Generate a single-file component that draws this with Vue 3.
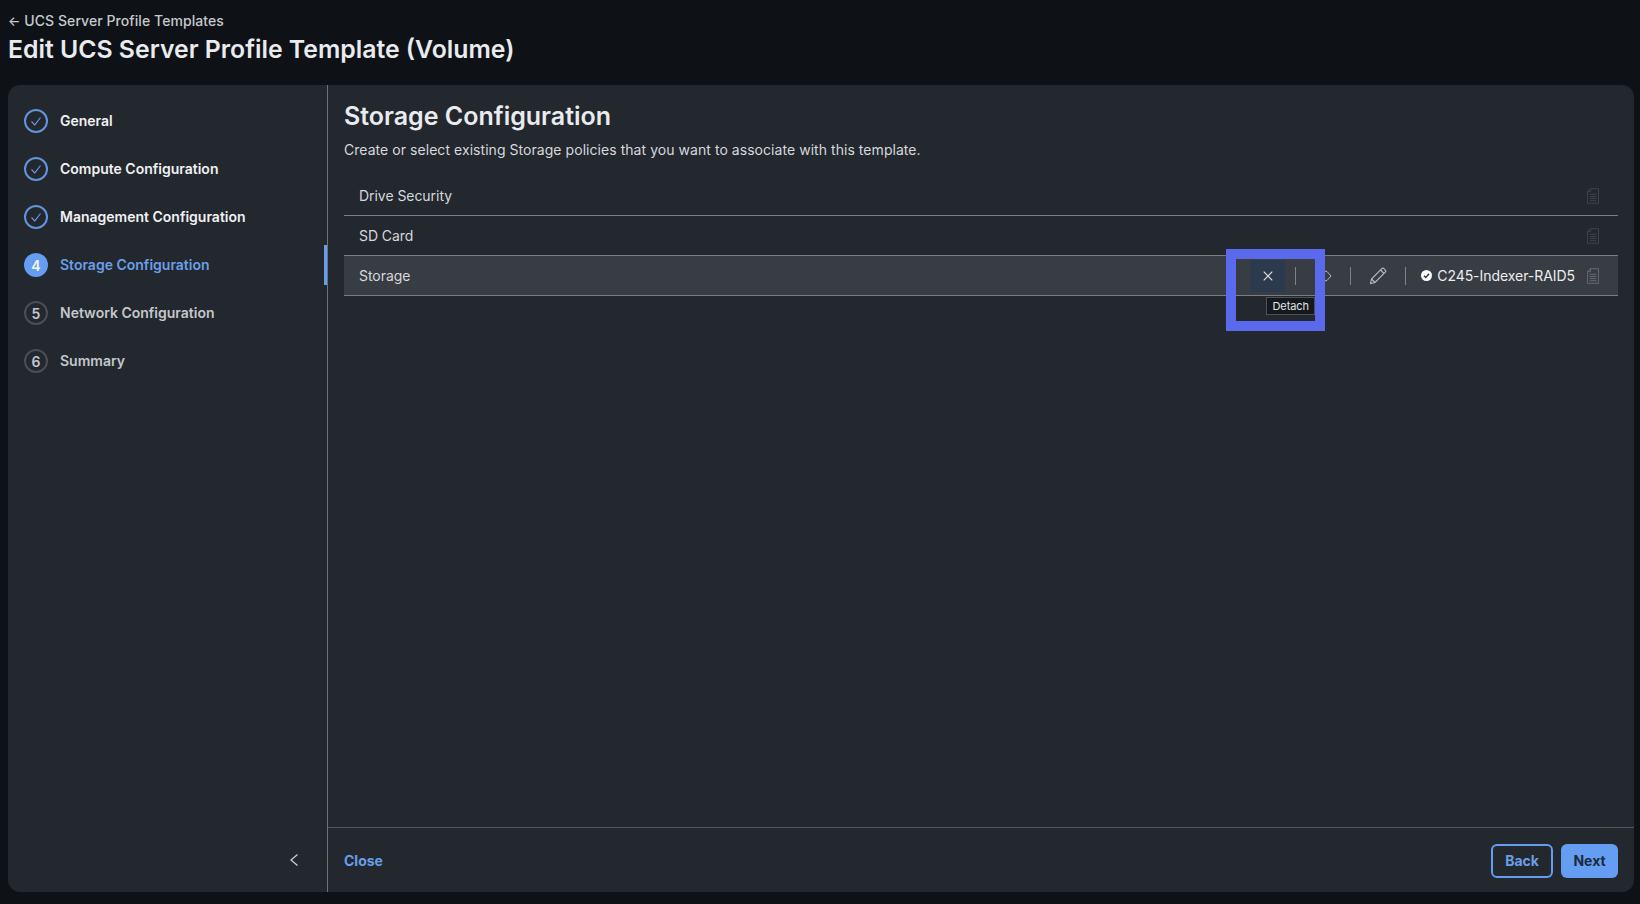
<script setup>
const steps = [
  { label: 'General', state: 'done' },
  { label: 'Compute Configuration', state: 'done' },
  { label: 'Management Configuration', state: 'done' },
  { label: 'Storage Configuration', state: 'active', n: 4 },
  { label: 'Network Configuration', state: 'todo', n: 5 },
  { label: 'Summary', state: 'todo', n: 6 },
]
const rows = [
  { name: 'Drive Security' },
  { name: 'SD Card' },
]
</script>

<template>
  <div class="page">
    <header class="head">
      <div class="crumb"><span class="arrow">←</span> UCS Server Profile Templates</div>
      <h1 class="title">Edit UCS Server Profile Template (Volume)</h1>
    </header>
    <section class="panel">
      <aside class="rail">
        <ul class="steps">
          <li v-for="s in steps" :key="s.label" class="step" :class="s.state">
            <span class="dot">
              <svg v-if="s.state === 'done'" width="14" height="14" viewBox="0 0 14 14" fill="none">
                <path d="M2.5 7.5 L5.8 10.8 L11.5 3.5" stroke="#6a9fe8" stroke-width="1.1" />
              </svg>
              <template v-else>{{ s.n }}</template>
            </span>
            <span class="lab">{{ s.label }}</span>
          </li>
        </ul>
        <div class="collapse">
          <svg width="10" height="14" viewBox="0 0 10 14" fill="none">
            <path d="M8.5 1.5 L2 7 L8.5 12.5" stroke="#c9ccd1" stroke-width="1.3" />
          </svg>
        </div>
      </aside>
      <main class="main">
        <div class="body">
          <h2 class="h2">Storage Configuration</h2>
          <p class="desc">Create or select existing Storage policies that you want to associate with this template.</p>
          <div class="list">
            <div v-for="r in rows" :key="r.name" class="row">
              <span class="name">{{ r.name }}</span>
              <svg class="doc dim" width="12" height="16" viewBox="0 0 14 18" fill="none">
                <path d="M4 .5H13.5V17.5H.5V4Z M4 .5V4H.5 M3 7H11 M3 9.5H11 M3 12H11 M3 14.5H11" stroke="currentColor" />
              </svg>
            </div>
            <div class="row sel">
              <span class="name">Storage</span>
              <div class="acts">
                <span class="x-btn">
                  <svg width="10" height="10" viewBox="0 0 10 10" fill="none">
                    <path d="M.7.7 9.300 9.300M9.300.7.7 9.300" stroke="#e4e6e9" stroke-width="1.1" />
                  </svg>
                  <span class="tip">Detach</span>
                </span>
                <i class="sep s1"></i>
                <svg class="eye" width="16" height="12" viewBox="0 0 16 12" fill="none">
                  <path d="M1 6 5 1.500Q8 .5 11 1.500L15 6 11 10.500Q8 11.500 5 10.500Z" stroke="#b5b8bd" />
                </svg>
                <i class="sep s2"></i>
                <svg class="pen" width="18" height="18" viewBox="0 0 18 18" fill="none">
                  <path d="M1.500 16.500 2.500 12 12.800 1.700a1.500 1.500 0 0 1 2.100 0l1.400 1.400a1.500 1.500 0 0 1 0 2.100L6 15.500Z M2.500 12 6 15.500 M11.500 3 15 6.500" stroke="#b9bcc1" stroke-width="1.100" />
                </svg>
                <i class="sep s3"></i>
                <svg class="chk" width="11" height="11" viewBox="0 0 11 11">
                  <circle cx="5.500" cy="5.500" r="5.500" fill="#fff" />
                  <path d="M3 5.700 4.800 7.400 8 3.800" stroke="#30343b" stroke-width="1.400" fill="none" />
                </svg>
                <span class="pol">C245-Indexer-RAID5</span>
              </div>
              <svg class="doc" width="12" height="16" viewBox="0 0 14 18" fill="none">
                <path d="M4 .5H13.5V17.5H.5V4Z M4 .5V4H.5 M3 7H11 M3 9.5H11 M3 12H11 M3 14.5H11" stroke="currentColor" />
              </svg>
              <div class="mark"></div>
            </div>
          </div>
        </div>
        <footer class="foot">
          <a class="close">Close</a>
          <div class="btns">
            <button class="btn back">Back</button>
            <button class="btn next">Next</button>
          </div>
        </footer>
      </main>
    </section>
  </div>
</template>

<style>
html, body { margin: 0; background: #0e1216; }
</style>

<style scoped>
.page {
  width: 1640px;
  height: 904px;
  box-sizing: border-box;
  background: #0e1216;
  font-family: Inter, "Liberation Sans", sans-serif;
  display: flex;
  flex-direction: column;
  overflow: hidden;
}
.head { height: 85px; padding: 12px 0 0 8px; box-sizing: border-box; }
.crumb { font-size: 14px; font-weight: 500; line-height: 17px; color: #c6c9ce; letter-spacing: .07px; }
.arrow { font-size: 13px; }
.title {
  margin: 4px 0 0;
  font-size: 24.8px;
  line-height: 30px;
  font-weight: 600;
  color: #e9ebee;
}
.panel {
  width: 1626px;
  height: 807px;
  margin-left: 8px;
  display: flex;
  background: #23272e;
  border-radius: 12px;
  overflow: hidden;
}
.rail {
  width: 320px;
  flex: none;
  box-sizing: border-box;
  border-right: 1px solid #6e7279;
  display: flex;
  flex-direction: column;
  justify-content: space-between;
}
.steps { list-style: none; margin: 0; padding: 12px 0 0 16px; }
.step {
  height: 48px;
  display: flex;
  align-items: center;
  gap: 12px;
  font-size: 14px;
  font-weight: 600;
  color: #f0f1f3;
  position: relative;
  top: -1px;
}
.dot {
  width: 24px;
  height: 24px;
  box-sizing: border-box;
  border-radius: 50%;
  display: flex;
  align-items: center;
  justify-content: center;
  font-size: 14px;
  flex: none;
  position: relative;
  top: 1px;
}
.done .dot { border: 2px solid #6295dd; }
.active .dot { background: #659df2; color: #f4f7fb; }
.active .lab { color: #6a9fe8; }
.todo .dot { border: 2px solid #4a4e55; color: #c4c7cc; }
.todo .lab { color: #c4c7cc; }
.active::after {
  content: '';
  position: absolute;
  top: 5px;
  left: 300px;
  width: 3px;
  height: 40px;
  background: #659df2;
}
.collapse { height: 64px; padding: 0 28px 0 0; display: flex; justify-content: flex-end; align-items: center; }
.main { flex: 1; display: flex; flex-direction: column; min-width: 0; }
.body { flex: 1; padding: 16px 16px 0 16px; }
.h2 { margin: 0; font-size: 25px; line-height: 30px; font-weight: 600; color: #e9ebee; }
.desc { margin: 9px 0 0; font-size: 14px; line-height: 20px; color: #d6d8dc; letter-spacing: .05px; }
.list { margin-top: 16px; }
.row {
  height: 40px;
  box-sizing: border-box;
  border-bottom: 1px solid #7a7e85;
  padding: 0 19px 0 15px;
  display: flex;
  align-items: center;
  justify-content: space-between;
  color: #d6d8dc;
  font-size: 14px;
  letter-spacing: -.05px;
  position: relative;
}
.sel { background: #383c43; border-top: 1px solid #7a7e85; height: 41px; margin-top: -1px; }
.doc { color: #6d7178; flex: none; }
.doc.dim { color: #44484f; }
.acts { margin-left: auto; margin-right: 12px; display: flex; align-items: center; }
.x-btn {
  width: 35px;
  height: 32px;
  background: #2c3a4d;
  display: flex;
  align-items: center;
  justify-content: center;
  position: relative;
}
.tip {
  position: absolute;
  top: 37px;
  left: 16px;
  width: 49px;
  height: 18px;
  box-sizing: border-box;
  background: #15181c;
  border: 1px solid #4c5057;
  color: #e2e4e7;
  font-size: 11px;
  line-height: 16px;
  text-align: center;
  z-index: 1;
}
.sep { display: block; width: 1px; height: 18px; background: #7f8389; flex: none; }
.s1 { margin-left: 10px; }
.eye { margin: 0 18px 0 20px; }
.pen { margin: 0 18px 0 18px; }
.chk { margin-left: 15px; }
.pol { margin-left: 5px; color: #eceef0; font-size: 14px; letter-spacing: -.05px; }
.mark {
  position: absolute;
  left: 882px;
  top: -7px;
  width: 79px;
  height: 62px;
  border: 10px solid #5b69ec;
  pointer-events: none;
}
.foot {
  height: 65px;
  box-sizing: border-box;
  border-top: 1px solid #53575e;
  padding: 1px 16px 0 16px;
  display: flex;
  align-items: center;
  justify-content: space-between;
}
.close { color: #6a9fe8; font-size: 14px; font-weight: 700; }
.btns { display: flex; gap: 8px; }
.btn {
  height: 34px;
  box-sizing: border-box;
  border-radius: 6px;
  font-family: inherit;
  font-size: 14px;
  font-weight: 700;
}
.back { width: 62px; background: transparent; border: 2px solid #659df2; color: #6a9fe8; padding: 0; }
.next { width: 57px; background: #659df2; border: none; color: #1c2940; padding: 0; }
</style>
